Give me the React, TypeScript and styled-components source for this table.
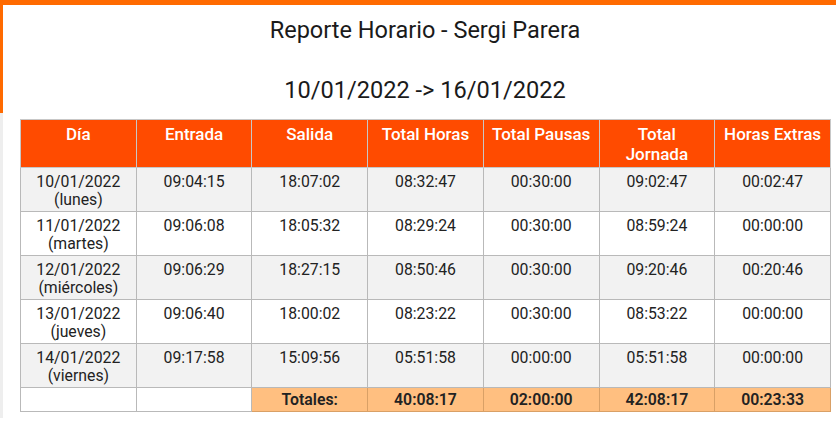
import React from "react";
import styled, {createGlobalStyle, css} from "styled-components";

const GlobalStyle = createGlobalStyle`
    html, body {
      margin: 0;
      padding: 0;
      background: #fff;
      font-family: Roboto, "Liberation Sans", Arial, sans-serif;
      color: #222;
    }
`;

const Frame = styled.div`
    border-top: 5px solid #ff6a00;
    border-left: 3px solid #ff6a00;
    border-image: linear-gradient(to bottom, #ff6a00 0, #ff6a00 110px, #eeeeee 110px, #eeeeee 100%) 1;
    border-right: 0;
    border-bottom: 0;
    min-height: 418px;
    box-sizing: border-box;
    padding: 0 6px 0 17px;
`;

const Title = styled.h1`
    margin: 0;
    padding-top: 10px;
    height: 30px;
    font-size: 23.5px;
    line-height: 30px;
    font-weight: 400;
    text-align: center;
    color: #1a1a1a;
`;

const Period = styled.h2`
    margin: 0;
    padding-top: 30px;
    height: 30px;
    font-size: 23.6px;
    line-height: 30px;
    font-weight: 400;
    text-align: center;
    color: #1a1a1a;
`;

const Table = styled.table`
    margin-top: 14px;
    width: 811px;
    border-collapse: collapse;
    table-layout: fixed;
    border: 1px solid #b9b9b9;
`;

const HeadCell = styled.th`
    background: #ff4b00;
    color: #fff;
    font-size: 17px;
    line-height: 20px;
    font-weight: 500;
    padding: 4px 6px 3px;
    height: 40px;
    vertical-align: top;
    text-align: center;
    border: 1px solid #c7c7c7;
`;

interface Striped {
    striped: boolean;
}

const Row = styled.tr<Striped>`
    background: ${(props) => props.striped ? "#f2f2f2" : "#fff"};
`;

const Cell = styled.td`
    font-size: 15.8px;
    line-height: 18px;
    padding: 5px 2px 2px;
    vertical-align: top;
    text-align: center;
    color: #222;
    border: 1px solid #b9b9b9;
`;

interface Highlight {
    total: boolean;
}

const TotalCell = styled.td<Highlight>`
    font-size: 15.8px;
    line-height: 18px;
    font-weight: 600;
    padding: 3px 2px 2px;
    text-align: center;
    color: #222;
    border: 1px solid #b9b9b9;
    ${(props) => props.total && css`
        background: #ffbf80;
        border-color: #d9a066;
    `}
`;

const columns = ["Día", "Entrada", "Salida", "Total Horas", "Total Pausas", "Total Jornada", "Horas Extras"];

const days = [
    {date: "10/01/2022", name: "lunes", entrada: "09:04:15", salida: "18:07:02", horas: "08:32:47", pausas: "00:30:00", jornada: "09:02:47", extras: "00:02:47"},
    {date: "11/01/2022", name: "martes", entrada: "09:06:08", salida: "18:05:32", horas: "08:29:24", pausas: "00:30:00", jornada: "08:59:24", extras: "00:00:00"},
    {date: "12/01/2022", name: "miércoles", entrada: "09:06:29", salida: "18:27:15", horas: "08:50:46", pausas: "00:30:00", jornada: "09:20:46", extras: "00:20:46"},
    {date: "13/01/2022", name: "jueves", entrada: "09:06:40", salida: "18:00:02", horas: "08:23:22", pausas: "00:30:00", jornada: "08:53:22", extras: "00:00:00"},
    {date: "14/01/2022", name: "viernes", entrada: "09:17:58", salida: "15:09:56", horas: "05:51:58", pausas: "00:00:00", jornada: "05:51:58", extras: "00:00:00"},
];

const totals = ["Totales:", "40:08:17", "02:00:00", "42:08:17", "00:23:33"];

const App = () => {
    return (
        <Frame>
            <GlobalStyle/>
            <Title>Reporte Horario - Sergi Parera</Title>
            <Period>10/01/2022 -&gt; 16/01/2022</Period>
            <Table>
                <thead>
                    <tr>
                        {columns.map((c) => <HeadCell key={c}>{c}</HeadCell>)}
                    </tr>
                </thead>
                <tbody>
                    {days.map((d, i) => (
                        <Row key={d.date} striped={i % 2 === 0}>
                            <Cell>{d.date}<br/>({d.name})</Cell>
                            <Cell>{d.entrada}</Cell>
                            <Cell>{d.salida}</Cell>
                            <Cell>{d.horas}</Cell>
                            <Cell>{d.pausas}</Cell>
                            <Cell>{d.jornada}</Cell>
                            <Cell>{d.extras}</Cell>
                        </Row>
                    ))}
                    <tr>
                        <TotalCell total={false}/>
                        <TotalCell total={false}/>
                        {totals.map((t) => <TotalCell key={t} total={true}>{t}</TotalCell>)}
                    </tr>
                </tbody>
            </Table>
        </Frame>
    );
};

export default App;
